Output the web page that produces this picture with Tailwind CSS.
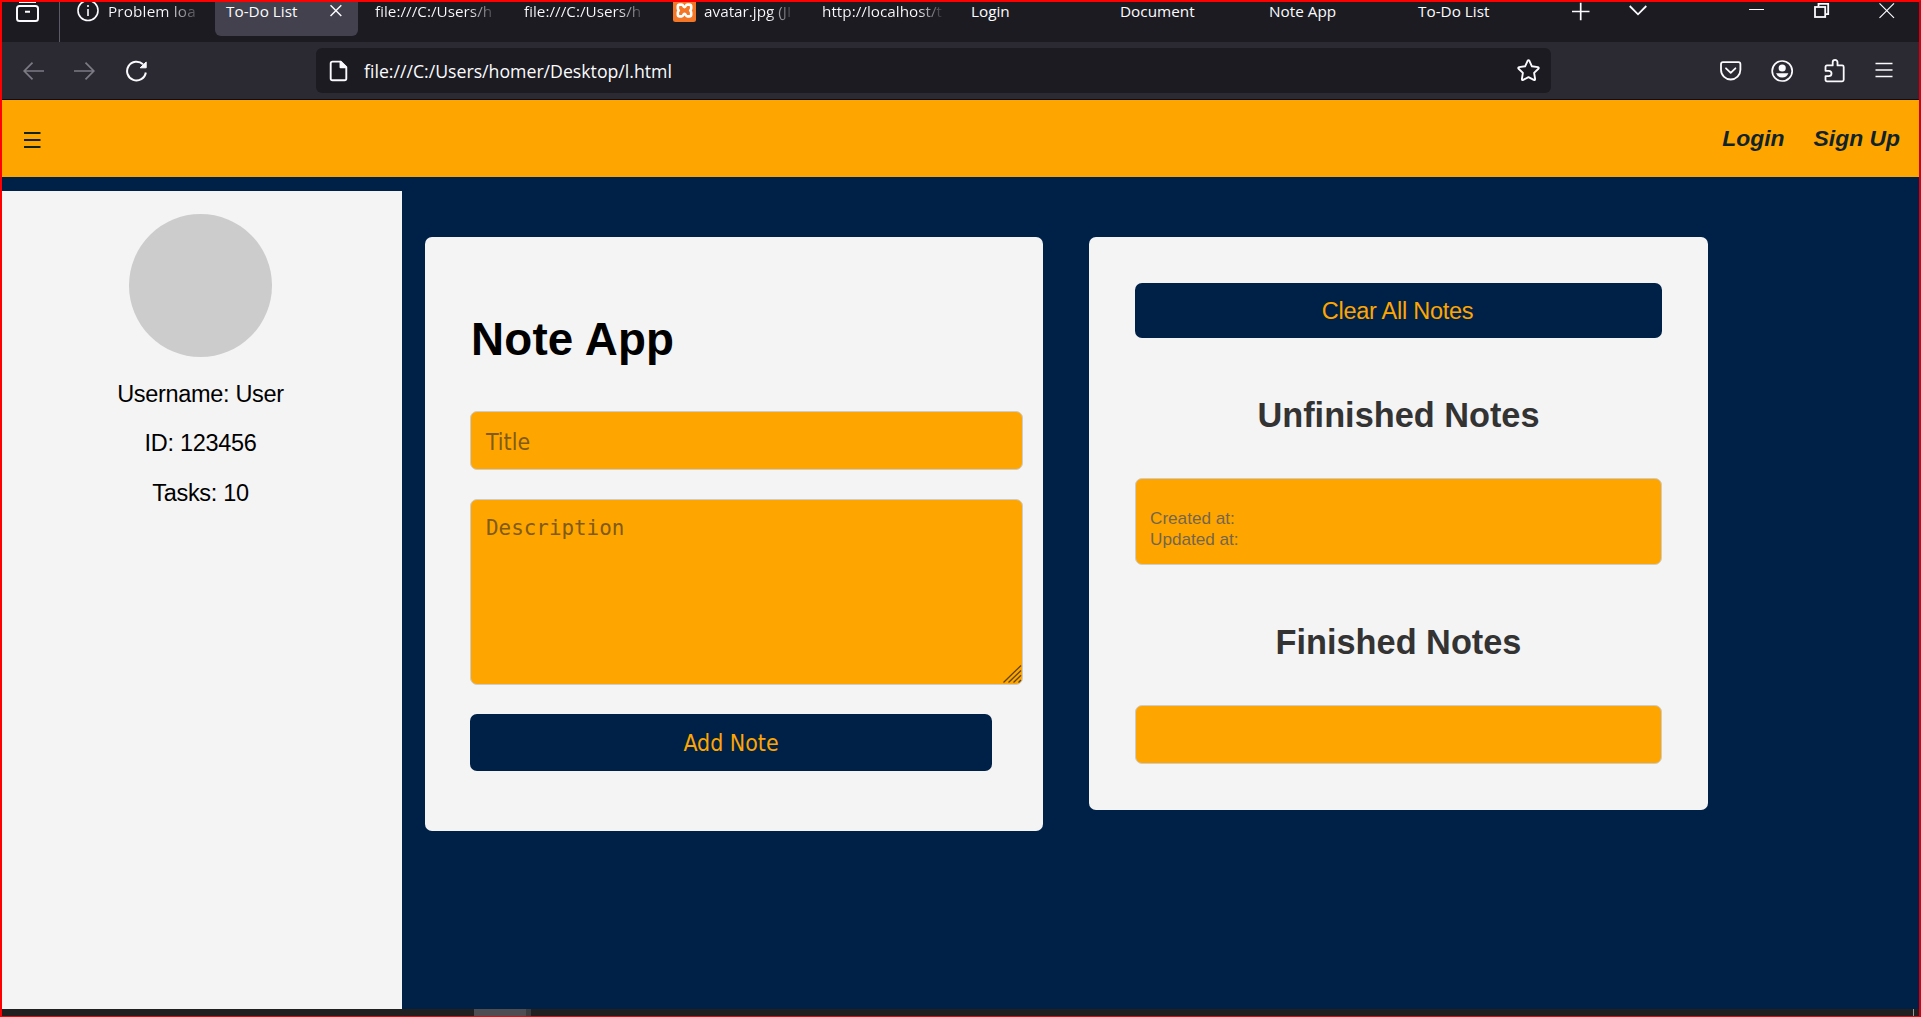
<!DOCTYPE html>
<html lang="en">
<head>
<meta charset="utf-8">
<title>To-Do List</title>
<script src="https://cdn.jsdelivr.net/npm/@tailwindcss/browser@4"></script>
</head>
<body class="h-[1017px] w-[1921px] overflow-hidden bg-[#002147] font-['Liberation_Sans',Arial,sans-serif]">
<div class="relative flex h-[1017px] w-[1921px] flex-col overflow-hidden">

  <!-- Tab strip -->
  <div class="flex h-[42px] shrink-0 bg-[#1c1b22] font-['Open_Sans',sans-serif] text-[15.3px] leading-[22px] text-[#fbfbfe]">
    <div class="w-[60px] shrink-0 border-r border-[#5b5b66]">
      <svg class="ml-4 h-[23px] w-6" viewBox="0 0 24 23" fill="none" stroke="#fbfbfe" stroke-width="2"><rect x="1" y="6" width="21" height="15" rx="2.5"/><path d="M3 2h17M9 11.7h5"/></svg>
    </div>
    <div class="ml-[6px] flex w-[149px] shrink-0 pl-[11px]">
      <svg class="h-[22px] w-[22px] shrink-0" viewBox="0 0 22 22" fill="none" stroke="#fbfbfe" stroke-width="1.6"><circle cx="11" cy="10.5" r="10"/><path d="M11 9v7M11 5v2"/></svg>
      <span class="ml-[9px] whitespace-nowrap bg-linear-to-r from-[#fbfbfe] from-65% to-transparent to-110% bg-clip-text tracking-[0.15px] text-transparent">Problem loa</span>
    </div>
    <div class="mr-[6px] flex h-9 w-[143px] shrink-0 justify-between rounded-b-[6px] bg-[#42414d] pl-[11px] pr-4">
      <span>To-Do List</span>
      <svg class="h-[22px] w-3" viewBox="0 0 12 22" fill="none" stroke="#fbfbfe" stroke-width="1.5"><path d="M.5 5.2l10.8 10.8M11.300 5.200L.5 16"/></svg>
    </div>
    <div class="flex w-[149px] shrink-0 pl-[11px]"><span class="whitespace-nowrap bg-linear-to-r from-[#fbfbfe] from-80% to-transparent to-105% bg-clip-text text-transparent">file:///C:/Users/h</span></div>
    <div class="flex w-[149px] shrink-0 pl-[11px]"><span class="whitespace-nowrap bg-linear-to-r from-[#fbfbfe] from-80% to-transparent to-105% bg-clip-text text-transparent">file:///C:/Users/h</span></div>
    <div class="flex w-[149px] shrink-0 pl-[11px]">
      <svg class="h-[22px] w-[23px] shrink-0" viewBox="0 0 23 22"><rect y="-1" width="23" height="23" rx="2.500" fill="#f37726"/><path d="M6.800 4.600h1.700q1.200 0 1.700 1.300t1.300 1.300 1.300-1.300 1.700-1.300h1.700q2 0 2 2v1.600q0 1.400-1 2.300 1 .9 1 2.300v1.600q0 2-2 2h-1.700q-1.200 0-1.700-1.300t-1.300-1.300-1.300 1.300-1.700 1.300H6.800q-2 0-2-2v-1.600q0-1.400 1-2.300-1-.9-1-2.300V6.600q0-2 2-2z" fill="none" stroke="#fff" stroke-width="2.600" stroke-linejoin="round"/></svg>
      <span class="ml-2 whitespace-nowrap bg-linear-to-r from-[#fbfbfe] from-75% to-transparent to-105% bg-clip-text text-transparent">avatar.jpg (JI</span>
    </div>
    <div class="flex w-[149px] shrink-0 pl-[11px]"><span class="whitespace-nowrap bg-linear-to-r from-[#fbfbfe] from-80% to-transparent to-102% bg-clip-text text-transparent">http://localhost/t</span></div>
    <div class="w-[149px] shrink-0 pl-[11px]">Login</div>
    <div class="w-[149px] shrink-0 pl-[11px]">Document</div>
    <div class="w-[149px] shrink-0 pl-[11px]">Note App</div>
    <div class="w-[149px] shrink-0 pl-[11px]">To-Do List</div>
    <svg class="ml-[16px] h-[22px] w-[18px] shrink-0" viewBox="0 0 18 22" fill="none" stroke="#fbfbfe" stroke-width="1.700"><path d="M0 11.500h17.500M8.700 2.800v17.500"/></svg>
    <svg class="ml-[39px] h-[22px] w-[18px] shrink-0" viewBox="0 0 18 22" fill="none" stroke="#fbfbfe" stroke-width="1.800"><path d="M.7 6l8.300 8.300L17.300 6"/></svg>
    <svg class="ml-[102px] h-[22px] w-4 shrink-0" viewBox="0 0 16 22"><path d="M0 9.500h15" stroke="#fbfbfe" stroke-width="1"/></svg>
    <svg class="ml-[49px] h-[22px] w-4 shrink-0" viewBox="0 0 16 22" fill="none" stroke="#fbfbfe" stroke-width="1.800"><rect x="1" y="7" width="10.200" height="10"/><path d="M4.500 6.500V3.900h9.700v10.300h-3"/></svg>
    <svg class="ml-[49px] h-[22px] w-4 shrink-0" viewBox="0 0 16 22" fill="none" stroke="#fbfbfe" stroke-width="1.200"><path d="M.5 3.300l14.500 14.500M15 3.300L.5 17.800"/></svg>
  </div>

  <!-- Navigation toolbar -->
  <div class="flex h-[58px] shrink-0 items-center border-b border-[#0c0c0d] bg-[#2b2a33] text-[#fbfbfe]">
    <svg class="ml-[23px] h-[18px] w-[21px]" viewBox="0 0 21 18" fill="none" stroke="#7c7b85" stroke-width="1.700"><path d="M21 9H1M9.500.7L1.200 9l8.300 8.300"/></svg>
    <svg class="ml-[30px] h-[18px] w-[21px]" viewBox="0 0 21 18" fill="none" stroke="#7c7b85" stroke-width="1.700"><path d="M0 9h20M11.500.7L19.800 9l-8.300 8.300"/></svg>
    <svg class="ml-[31px] h-[22px] w-[22px]" viewBox="0 0 22 22" fill="none" stroke="#fbfbfe" stroke-width="2"><path d="M19.800 12.500A9.400 9.400 0 1 1 17 4.300"/><path d="M20.200 2v5.800h-6z" fill="#fbfbfe" stroke-width="1" stroke-linejoin="round"/></svg>
    <div class="ml-[168px] flex h-[45px] w-[1235px] items-center rounded-[6px] bg-[#1c1b22]">
      <svg class="ml-[13px] h-[22px] w-[20px]" viewBox="0 0 20 22" fill="none" stroke="#fbfbfe" stroke-width="1.900" stroke-linejoin="round"><path d="M3.500 1.600h8.200l5.600 5.600v11.300q0 1.800-1.800 1.800H3.500q-1.800 0-1.800-1.800V3.400q0-1.800 1.800-1.800z"/><path d="M11.500 1.800v5.400h5.400z" fill="#fbfbfe"/></svg>
      <span class="ml-[15px] font-['Open_Sans',sans-serif] text-[17.7px] leading-6">file:///C:/Users/homer/Desktop/l.html</span>
      <svg class="ml-auto mr-[11px] h-[23px] w-[23px]" viewBox="0 0 23 23" fill="none" stroke="#fbfbfe" stroke-width="1.900" stroke-linejoin="round"><path d="M10.600 1.800q.9-1.400 1.800 0l2.500 5.500 6 .8q1.400.4.500 1.600l-4.300 4.200 1 6q.1 1.500-1.300 1l-5.300-2.800-5.300 2.800q-1.400.5-1.300-1l1-6L1.600 9.700q-.9-1.200.5-1.600l6-.8z"/></svg>
    </div>
    <svg class="ml-[169px] h-[20px] w-[22px]" viewBox="0 0 22 20" fill="none" stroke="#fbfbfe" stroke-width="1.800" stroke-linecap="round" stroke-linejoin="round"><path d="M3 1.200h15.400q2 0 2 2v5.600a9.700 9.700 0 0 1-19.400 0V3.200q0-2 2-2z"/><path d="M6 7.300l4.700 4.600 4.700-4.600"/></svg>
    <svg class="ml-[29px] h-[22px] w-[23px]" viewBox="0 0 23 22" fill="none" stroke="#fbfbfe" stroke-width="1.700"><circle cx="11.200" cy="11" r="10"/><circle cx="11.200" cy="8" r="3.600" fill="#fbfbfe" stroke="none"/><path d="M5 13.300h12.400q-1.600 4.200-6.200 4.200t-6.200-4.200z" fill="#fbfbfe" stroke="none"/></svg>
    <svg class="ml-[30px] h-[25px] w-[22px]" viewBox="0 0 22 25" fill="none" stroke="#fbfbfe" stroke-width="1.800" stroke-linejoin="round"><path d="M8.700 7.400V4.300a2.400 2.400 0 0 1 4.800 0v3.100h4.700q1.500 0 1.500 1.500v12.900q0 1.500-1.500 1.500H3q-1.500 0-1.500-1.500v-3.600h3.300a2.700 2.700 0 0 0 0-5.400H1.500V8.900q0-1.500 1.500-1.500z"/></svg>
    <svg class="ml-[29px] h-[18px] w-[18px]" viewBox="0 0 18 18" stroke="#fbfbfe" stroke-width="1.700"><path d="M.5 1.500h17M.5 8h17M.5 14.500h17"/></svg>
  </div>

  <!-- Page header -->
  <header class="flex h-[77px] shrink-0 justify-between bg-[#ffa500] pl-6 pr-[21px] pt-[25px] text-[22.9px] leading-[26px]">
    <svg class="mt-[6px] h-[18px] w-[17px]" viewBox="0 0 17 18"><path d="M0 2h16.500M0 9h16.500M0 16h16.500" stroke="#10232a" stroke-width="2"/></svg>
    <nav class="flex gap-[29px] font-bold italic text-[#10232a]"><a>Login</a><a>Sign Up</a></nav>
  </header>

  <main class="mt-[14px] flex h-[818px] shrink-0 items-start">
    <aside class="flex h-full w-[402px] shrink-0 flex-col items-center bg-[#f4f4f4] pr-[1px] pt-[23px] text-[23.5px] leading-[26px] tracking-[-0.32px] text-black">
      <div class="h-[143px] w-[143px] rounded-full bg-[#ccc]"></div>
      <p class="mt-6">Username: User</p>
      <p class="mt-[23px]">ID: 123456</p>
      <p class="mt-6">Tasks: 10</p>
    </aside>

    <section class="ml-[23px] mt-[46px] h-[594px] w-[618px] shrink-0 rounded-[7px] bg-[#f4f4f4] pl-[45px] pt-[77px]">
      <h1 class="pl-[1px] text-[45.75px] font-bold leading-[52px] tracking-[0.2px] text-black">Note App</h1>
      <div class="mt-[45px] h-[59px] w-[553px] rounded-[7px] border border-[#ccc] bg-[#ffa500] pl-[15px] pt-[17px] font-['DejaVu_Sans_Condensed','DejaVu_Sans',sans-serif] text-[22.9px] leading-[26px] text-[#805b16]">Title</div>
      <div class="mt-[29px] flex h-[186px] w-[553px] items-start justify-between rounded-[7px] border border-[#ccc] bg-[#ffa500] pl-[15px] pt-[15px] font-['DejaVu_Sans_Mono',monospace] text-[20.9px] leading-[26px] text-[#805b16]">
        <span>Description</span>
        <svg class="mb-[1px] h-[18px] w-[19px] self-end" viewBox="0 0 19 18" stroke="#5c4310" stroke-width="1.300"><path d="M.5 17.500L18 .5M5.500 17.500L18 5.500M10.500 17.500L18 10.300M15.500 17.500L18 15"/></svg>
      </div>
      <div class="mt-[29px] h-[57px] w-[522px] rounded-[7px] bg-[#002147] pt-4 text-center font-['DejaVu_Sans_Condensed','DejaVu_Sans',sans-serif] text-[22.9px] leading-[26px] text-[#ffa500]">Add Note</div>
    </section>

    <section class="ml-[46px] mt-[46px] h-[573px] w-[619px] shrink-0 rounded-[7px] bg-[#f4f4f4] px-[46px] pt-[46px]">
      <div class="h-[55px] rounded-[7px] bg-[#002147] pr-[2px] pt-[15px] text-center text-[23.5px] leading-[26px] tracking-[-0.26px] text-[#ffa500]">Clear All Notes</div>
      <h2 class="mt-[57px] text-center text-[34.3px] font-bold leading-10 text-[#333]">Unfinished Notes</h2>
      <div class="mt-[43px] h-[87px] rounded-[7px] border border-[#ccc] bg-[#ffa500] pl-[14px] pt-[29px] text-[17.15px] leading-[21px] text-[#73664d]">
        <p>Created at:</p>
        <p>Updated at:</p>
      </div>
      <h2 class="mt-[57px] text-center text-[34.3px] font-bold leading-10 text-[#333]">Finished Notes</h2>
      <div class="mt-[43px] h-[59px] rounded-[7px] border border-[#ccc] bg-[#ffa500]"></div>
    </section>
  </main>

  <!-- Taskbar edge -->
  <div class="flex h-2 shrink-0 bg-[#202020]">
    <div class="ml-[474px] w-[52px] bg-[#4e4d51]"></div>
    <div class="w-[5px] bg-[#3b3a3d]"></div>
    <div class="ml-auto mr-[7px] w-px bg-[#999]"></div>
  </div>

  <!-- Window outline -->
  <div class="pointer-events-none absolute inset-0 border-2 border-b border-[#ff0000] border-b-[#d81010] border-r-[#d00010]"></div>
</div>
</body>
</html>
